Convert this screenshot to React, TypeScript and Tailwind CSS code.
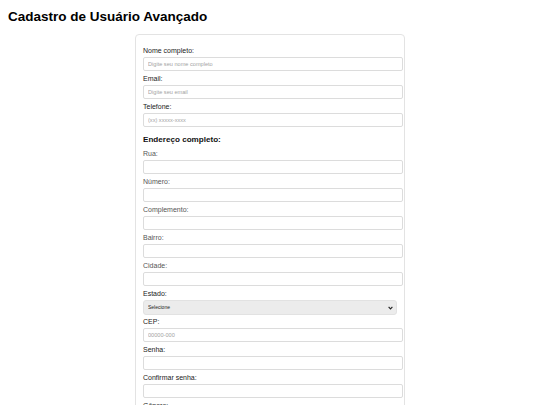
import React from "react";

type FieldProps = {
  label: string;
  placeholder?: string;
  type?: string;
  muted?: boolean;
};

function Field({ label, placeholder, type = "text", muted }: FieldProps) {
  return (
    <div className="flex flex-col">
      <label
        className={
          "block text-[7px] leading-[9px] mb-[2px] " +
          (muted ? "text-[#555]" : "text-[#222]")
        }
      >
        {label}
      </label>
      <input
        type={type}
        placeholder={placeholder}
        className="block h-[14px] w-[260px] mb-[3px] rounded-[2px] border border-[#dcdcdc] bg-white px-[4px] text-[5.6px] text-[#222] placeholder:text-[#a3a3a3] outline-none"
      />
    </div>
  );
}

export default function App() {
  return (
    <div className="bg-white pb-[24px] font-['Liberation_Sans',Arial,sans-serif] text-[#222]">
      <h1 className="pl-[8px] pt-[9px] text-[13.5px] leading-[16px] font-bold text-black">
        Cadastro de Usuário Avançado
      </h1>
      <div className="mx-auto mt-[9px] w-[270px] rounded-[4px] border border-[#e3e3e3] px-[7px] pt-[11px] pb-[12px]">
        <form className="flex flex-col">
          <Field label="Nome completo:" placeholder="Digite seu nome completo" />
          <Field label="Email:" placeholder="Digite seu email" type="email" />
          <Field label="Telefone:" placeholder="(xx) xxxxx-xxxx" type="tel" />

          <h3 className="mt-[5px] mb-[4px] text-[8.1px] leading-[10px] font-bold text-[#111]">
            Endereço completo:
          </h3>
          <Field label="Rua:" muted />
          <Field label="Número:" muted />
          <Field label="Complemento:" muted />
          <Field label="Bairro:" muted />
          <Field label="Cidade:" muted />

          <div className="flex flex-col">
            <label className="block text-[7px] leading-[9px] mb-[2px] text-[#222]">
              Estado:
            </label>
            <div className="relative mb-[2px] h-[15px] w-full">
              <select
                defaultValue=""
                className="block h-full w-full appearance-none rounded-[3px] border border-[#e2e2e2] bg-[#ececec] px-[4px] text-[5px] text-[#222] outline-none"
              >
                <option value="">Selecione</option>
                <option value="SP">São Paulo</option>
                <option value="RJ">Rio de Janeiro</option>
                <option value="MG">Minas Gerais</option>
              </select>
              <svg
                className="pointer-events-none absolute right-[4px] top-[5.5px]"
                width="5"
                height="4"
                viewBox="0 0 5 4"
              >
                <path d="M0.6 0.8 L2.5 2.9 L4.4 0.8" fill="none" stroke="#222" strokeWidth="1.1" />
              </svg>
            </div>
          </div>

          <Field label="CEP:" placeholder="00000-000" />
          <Field label="Senha:" type="password" />
          <Field label="Confirmar senha:" type="password" />

          <div className="flex flex-col">
            <label className="block text-[7px] leading-[9px] mb-[2px] text-[#222]">
              Gênero:
            </label>
            <div className="flex gap-[8px] text-[6px] mb-[6px]">
              <label className="flex items-center gap-[2px]">
                <input type="radio" name="g" className="h-[6px] w-[6px]" /> Masculino
              </label>
              <label className="flex items-center gap-[2px]">
                <input type="radio" name="g" className="h-[6px] w-[6px]" /> Feminino
              </label>
              <label className="flex items-center gap-[2px]">
                <input type="radio" name="g" className="h-[6px] w-[6px]" /> Outro
              </label>
            </div>
          </div>
          <button
            type="submit"
            className="h-[16px] w-full rounded-[3px] bg-[#4caf50] text-[7px] text-white"
          >
            Cadastrar
          </button>
        </form>
      </div>
    </div>
  );
}
